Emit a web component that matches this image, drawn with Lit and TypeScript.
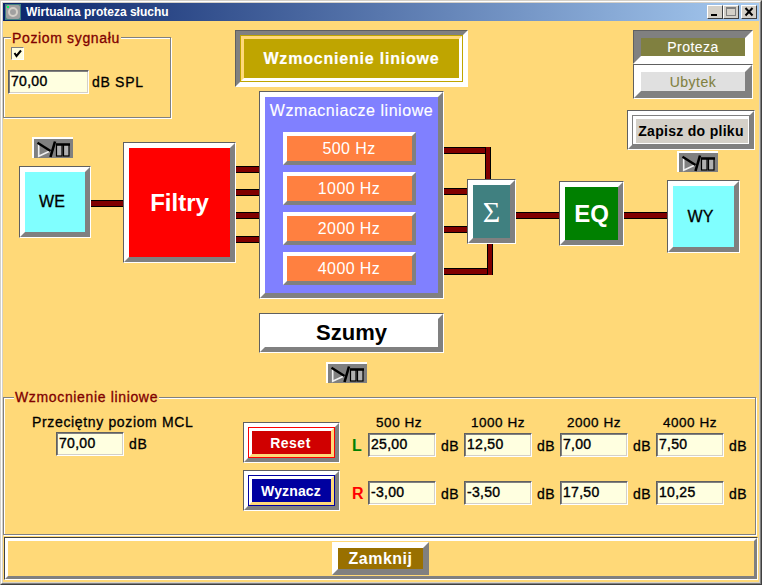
import { LitElement, html, css, svg } from "lit";
import { customElement } from "lit/decorators.js";

const ORIGIN = { x: 3, y: 21 };
const place = (x: number, y: number, w: number, h: number) =>
  `left:${x - ORIGIN.x}px;top:${y - ORIGIN.y}px;width:${w}px;height:${h}px`;

// horizontal and vertical wires of the diagram: x0, y0, x1, y1
const wires: [number, number, number, number][] = [
  [91, 200, 123, 207],
  [236, 166, 259, 173],
  [236, 189, 259, 196],
  [236, 212, 259, 219],
  [236, 236, 259, 243],
  [444, 147, 491, 154],
  [485, 147, 491, 180],
  [444, 188, 467, 195],
  [444, 226, 467, 233],
  [444, 268, 493, 275],
  [487, 243, 493, 275],
  [516, 212, 559, 219],
  [624, 212, 667, 219],
];

const playIcon = svg`<svg class="pp" viewBox="0 0 41 21" width="41" height="21">
  <path d="M6.7 6.5 V19.3 L18 14" fill="none" stroke="#f0f0f0" stroke-width="1.6"/>
  <path d="M5.5 5.8 L18.5 14" stroke="#000" stroke-width="2.4" fill="none"/>
  <path d="M23 4.5 L18.5 20" stroke="#000" stroke-width="2.6" fill="none"/>
  <rect x="24.5" y="7.5" width="5.5" height="11.5" fill="#b0b0b0" stroke="#000" stroke-width="1.2"/>
  <rect x="31.5" y="7.5" width="5.5" height="11.5" fill="#b0b0b0" stroke="#000" stroke-width="1.2"/>
  <path d="M24 7.5 H38" stroke="#000" stroke-width="2.5"/>
</svg>`;

const freqs = ["500 Hz", "1000 Hz", "2000 Hz", "4000 Hz"];
const left = ["25,00", "12,50", "7,00", "7,50"];
const right = ["-3,00", "-3,50", "17,50", "10,25"];

@customElement("app-root")
export class AppRoot extends LitElement {
  static styles = css`
    :host {
      display: block;
      width: 762px;
      height: 585px;
      font-family: "Liberation Sans", Arial, sans-serif;
      color: #000;
      overflow: hidden;
      -webkit-text-stroke: 0.3px currentColor;
    }
    * { box-sizing: border-box; }
    .window {
      width: 762px;
      height: 585px;
      background: #d4d0c8;
      border: 1px solid;
      border-color: #d4d0c8 #404040 #404040 #d4d0c8;
      display: flex;
      flex-direction: column;
    }
    .window-in {
      flex: 1;
      min-height: 0;
      border: 1px solid;
      border-color: #fff #808080 #808080 #fff;
      padding: 1px;
      display: flex;
      flex-direction: column;
    }
    .title {
      height: 18px;
      flex: none;
      background: linear-gradient(90deg, #0a246a, #a6caf0);
      color: #fff;
      display: flex;
      align-items: center;
      padding: 0 2px;
      gap: 5px;
      font-size: 12px;
      font-weight: 700;
      -webkit-text-stroke: 0;
    }
    .tbtns { margin-left: auto; display: flex; }
    .tb {
      width: 16px;
      height: 14px;
      background: #d4d0c8;
      border: 1px solid;
      border-color: #fff #404040 #404040 #fff;
      display: block;
    }
    .tb svg { display: block; }
    .tb.close { margin-left: 2px; }
    .client {
      flex: 1;
      min-height: 0;
      background: #ffd978;
      display: flex;
      flex-direction: column;
    }
    .canvas { position: relative; height: 376px; flex: none; }
    .abs { position: absolute; }
    .wire {
      position: absolute;
      background: #800000;
      border: 1px solid #000;
      border-left: 0;
      border-right: 0;
    }
    .wire.v { border: 0; border-left: 1px solid #000; border-right: 1px solid #000; }

    /* bevels: an outer hairline and a wide mitred edge around the face */
    .out {
      position: absolute;
      border: 1px solid;
      border-color: #606060 #fff #fff #606060;
    }
    .bev {
      width: 100%;
      height: 100%;
      border: 5px solid;
      border-color: #fff #808080 #808080 #fff;
      display: flex;
      align-items: center;
      justify-content: center;
    }
    .pressed { border-color: #808080 #fff #fff #808080; }
    .face {
      width: 100%;
      height: 100%;
      display: flex;
      align-items: center;
      justify-content: center;
    }
    .filtry { background: #f00; color: #fff; font: 700 24px "Liberation Sans", sans-serif; -webkit-text-stroke: 0; }
    .cyan { background: #80ffff; font-size: 16px; padding-right: 6px; }
    .eq { background: #008000; color: #fff; font: 700 24px "Liberation Sans", sans-serif; -webkit-text-stroke: 0; }
    .sum { background: #408080; color: #fff; font: 30px "Liberation Serif", serif; -webkit-text-stroke: 0; }
    .szumy { background: #fff; font: 700 22px "Liberation Sans", sans-serif; -webkit-text-stroke: 0; }
    .panel { background: #8080ff; position: relative; }
    .panel-title {
      position: absolute;
      left: 0;
      right: 0;
      top: 5px;
      text-align: center;
      color: #fff;
      font-size: 16px;
      letter-spacing: 0.55px;
      white-space: nowrap;
      -webkit-text-stroke: 0.15px #fff;
    }
    .freq {
      position: absolute;
      border: 4px solid;
      border-color: #fff #808080 #808080 #fff;
      background: #ff8040;
      color: #fff;
      font-size: 16px;
      letter-spacing: 0.4px;
      display: flex;
      align-items: center;
      justify-content: center;
      padding-right: 1px;
      -webkit-text-stroke: 0;
    }
    .mode { border-width: 7px; font-size: 14px; letter-spacing: 0.5px; -webkit-text-stroke: 0.1px currentColor; }
    .proteza { background: #808040; color: #fff; }
    .ubytek { background: #e0e0e0; color: #808040; }

    .pp-btn {
      position: absolute;
      width: 41px;
      height: 21px;
      background: #808080;
      border: solid #fff;
      border-width: 2px 0 0 2px;
    }
    .pp { display: block; margin: -2px 0 0 -2px; }

    /* buttons with a focus line inside the edge */
    .fbtn .bev { border-width: 4px; }
    .ring {
      width: 100%;
      height: 100%;
      border: 1px solid;
    }
    .ring2 {
      width: 100%;
      height: 100%;
      border: 3px solid;
      border-color: #fff #ffd978 #ffd978 #fff;
    }
    .gold .ring { border-color: #bfa500; }
    .gold .ring2 { border-color: #ffd978 #fff #fff #ffd978; }
    .gold .face { background: #bfa500; color: #fff; font: 700 16px "Liberation Sans", sans-serif; letter-spacing: 0.8px; -webkit-text-stroke: 0.2px #fff; }
    .save .ring { border-color: #808080; border-right-width: 1px; }
    .save .ring2 { border-color: #fff; border-width: 3px 1px 1px 3px; }
    .save .face { background: #d4d0c8; font: 700 14px "Liberation Sans", sans-serif; letter-spacing: 0.3px; white-space: nowrap; -webkit-text-stroke: 0; padding-right: 2px; }

    /* etched groups */
    .group {
      position: relative;
      border: 1px solid #808080;
      box-shadow: 1px 1px 0 #fff, inset 1px 1px 0 #fff;
    }
    .legend {
      position: absolute;
      background: #ffd978;
      color: #800000;
      font-size: 14px;
      line-height: 16px;
      padding: 0 1px;
      white-space: nowrap;
      letter-spacing: 0.65px;
    }
    .signal .legend { left: 7px; top: -8px; }
    .signal { display: flex; flex-direction: column; padding: 9px 0 0 4px; }
    .check {
      width: 13px;
      height: 13px;
      margin-left: 3px;
      background: #ffffe0;
      border: 1px solid;
      border-color: #808080 #fff #fff #808080;
      display: block;
    }
    .check svg { display: block; }
    .sigrow { display: flex; align-items: center; gap: 3px; margin-top: 10px; font-size: 14px; letter-spacing: 0.7px; }
    .field {
      flex: none;
      background: #ffffe0;
      border: 1px solid;
      border-color: #606060 #fff #fff #606060;
      box-shadow: inset 1px 1px 0 #808080, inset -1px -1px 0 #d4d0c8;
      font-size: 14px;
      font-weight: 400;
      line-height: 18px;
      padding: 1px 0 0 2px;
      letter-spacing: 0.3px;
      display: block;
      height: 24px;
      width: 68px;
      -webkit-text-stroke: 0.4px #000;
    }
    .signal .field { width: 81px; padding-left: 2px; }

    .gain {
      height: 138px;
      flex: none;
      margin-right: 3px;
      display: flex;
      padding-top: 17px;
      font-size: 14px;
    }
    .gain .legend { left: 10px; top: -9px; }
    .mcl { width: 239px; flex: none; display: flex; flex-direction: column; letter-spacing: 0.65px; }
    .mcl-label { margin: -1px 0 0 28px; line-height: 16px; white-space: nowrap; }
    .mcl-row { display: flex; align-items: center; gap: 5px; margin: 2px 0 0 52px; }
    .acts { width: 97px; flex: none; display: flex; flex-direction: column; gap: 7px; margin-top: 7px; }
    .fbtn-flow { position: relative; width: 97px; height: 41px; flex: none; border: 1px solid; border-color: #606060 #fff #fff #606060; }
    .red .ring { border-color: #f00; }
    .red .face { background: #d00000; color: #fff; font: 700 14px "Liberation Sans", sans-serif; letter-spacing: 0.5px; padding-right: 2px; -webkit-text-stroke: 0; }
    .blue .ring { border-color: #0000a0; }
    .blue .face { background: #0000a0; color: #fff; font: 700 14px "Liberation Sans", sans-serif; letter-spacing: 0.15px; padding-right: 1px; -webkit-text-stroke: 0; }
    .grid {
      margin-left: 12px;
      display: grid;
      grid-template-columns: 16px repeat(4, 68px 28px);
      grid-template-rows: 18px 24px 24px 24px;
      align-items: center;
      letter-spacing: 0.5px;
    }
    .hz { text-align: center; white-space: nowrap; font-size: 13.5px; line-height: 16px; align-self: start; font-weight: 400; }
    .hz.first { padding-right: 6px; }
    .db { padding-left: 5px; padding-top: 2px; }
    .spacer { grid-column: 1 / -1; }
    .lr { font-weight: 700; font-size: 16px; padding-top: 2px; -webkit-text-stroke: 0; }
    .l { color: #008000; }
    .r { color: #f00; }

    .footer {
      height: 43px;
      flex: none;
      margin: 2px 1px 0 1px;
      border: 1px solid;
      border-color: #404040 #fff #fff #404040;
    }
    .footer-in {
      height: 100%;
      border: 3px solid;
      border-color: #fff #808080 #808080 #fff;
      display: flex;
      justify-content: center;
      align-items: center;
      padding-right: 1px;
    }
    .close-btn {
      width: 97px;
      height: 33px;
      border: 6px solid;
      border-color: #fff #808080 #808080 #fff;
      background: #997000;
      color: #fff;
      font: 700 16px "Liberation Sans", sans-serif;
      letter-spacing: 0.5px;
      display: flex;
      align-items: center;
      justify-content: center;
      -webkit-text-stroke: 0;
    }
  `;

  private titleIcon() {
    return svg`<svg width="16" height="16" viewBox="0 0 16 16">
      <rect width="16" height="16" fill="#408080"/>
      <rect x="1" y="1" width="14" height="14" rx="2" fill="#a0a0a0"/>
      <circle cx="8" cy="8" r="4" fill="none" stroke="#d4d0c8" stroke-width="2"/>
      <rect x="2" y="2" width="2" height="2" fill="#00ff60"/>
    </svg>`;
  }

  private box(x: number, y: number, w: number, h: number, faceCls: string, text: string) {
    return html`<div class="out" style=${place(x, y, w, h)}>
      <div class="bev"><div class="face ${faceCls}">${text}</div></div>
    </div>`;
  }

  private cellRow(label: string, cls: string, vals: string[]) {
    return html`<span class="lr ${cls}">${label}</span>
      ${vals.map((v) => html`<span class="field">${v}</span><span class="db">dB</span>`)}`;
  }

  render() {
    return html`<div class="window"><div class="window-in">
      <div class="title">
        ${this.titleIcon()}
        <span>Wirtualna proteza słuchu</span>
        <span class="tbtns">
          <span class="tb"><svg width="14" height="12"><rect x="3" y="8" width="6" height="2" fill="#000"/></svg></span>
          <span class="tb"><svg width="14" height="12"><rect x="2.5" y="1.5" width="9" height="8" fill="none" stroke="#808080"/><rect x="2" y="1" width="10" height="2" fill="#808080"/></svg></span>
          <span class="tb close"><svg width="14" height="12"><path d="M3.5 2 L10.5 9.5 M10.5 2 L3.5 9.5" stroke="#000" stroke-width="2"/></svg></span>
        </span>
      </div>
      <div class="client">
        <div class="canvas">
          ${wires.map(([x0, y0, x1, y1]) => html`<div
            class="wire ${x1 - x0 < 10 ? "v" : ""}"
            style=${place(x0, y0, x1 - x0, y1 - y0)}></div>`)}

          <div class="group signal abs" style=${place(3, 37, 168, 81)}>
            <span class="legend">Poziom sygnału</span>
            <span class="check"><svg width="11" height="11"><path d="M2.5 5 L4.5 8 L9 2.5" fill="none" stroke="#000" stroke-width="2"/></svg></span>
            <div class="sigrow"><span class="field">70,00</span><span>dB SPL</span></div>
          </div>

          <div class="out fbtn gold" style=${place(235, 30, 233, 57)}>
            <div class="bev pressed"><div class="ring"><div class="ring2"><div class="face">Wzmocnienie liniowe</div></div></div></div>
          </div>

          <div class="out" style=${place(633, 30, 120, 34)}>
            <div class="bev pressed mode"><div class="face proteza">Proteza</div></div>
          </div>
          <div class="out" style=${place(633, 64, 120, 35)}>
            <div class="bev mode"><div class="face ubytek">Ubytek</div></div>
          </div>

          <div class="out fbtn save" style=${place(627, 110, 128, 40)}>
            <div class="bev"><div class="ring"><div class="ring2"><div class="face">Zapisz do pliku</div></div></div></div>
          </div>

          <div class="pp-btn" style=${place(32, 137, 41, 21)}>${playIcon}</div>
          <div class="pp-btn" style=${place(677, 151, 41, 21)}>${playIcon}</div>
          <div class="pp-btn" style=${place(326, 362, 41, 21)}>${playIcon}</div>

          ${this.box(19, 166, 72, 72, "cyan", "WE")}
          ${this.box(123, 142, 113, 121, "filtry", "Filtry")}
          ${this.box(467, 179, 49, 65, "sum", "Σ")}
          ${this.box(559, 181, 65, 65, "eq", "EQ")}
          ${this.box(667, 180, 73, 73, "cyan", "WY")}
          ${this.box(259, 313, 185, 40, "szumy", "Szumy")}

          <div class="out" style=${place(259, 91, 185, 208)}>
            <div class="bev"><div class="face panel"><span class="panel-title">Wzmacniacze liniowe</span></div></div>
          </div>
          ${freqs.map((f, i) => html`<div class="freq" style=${place(283, 132 + i * 40, 133, 33)}>${f}</div>`)}
        </div>

        <div class="group gain">
          <span class="legend">Wzmocnienie liniowe</span>
          <div class="mcl">
            <div class="mcl-label">Przeciętny poziom MCL</div>
            <div class="mcl-row"><span class="field">70,00</span><span>dB</span></div>
          </div>
          <div class="acts">
            <div class="fbtn-flow fbtn red"><div class="bev"><div class="ring"><div class="ring2"><div class="face">Reset</div></div></div></div></div>
            <div class="fbtn-flow fbtn blue"><div class="bev"><div class="ring"><div class="ring2"><div class="face">Wyznacz</div></div></div></div></div>
          </div>
          <div class="grid">
            <span></span>
            ${freqs.map((f, i) => html`<span class="hz ${i === 0 ? "first" : ""}">${f}</span><span></span>`)}
            ${this.cellRow("L", "l", left)}
            <span class="spacer"></span>
            ${this.cellRow("R", "r", right)}
          </div>
        </div>

        <div class="footer"><div class="footer-in"><div class="close-btn">Zamknij</div></div></div>
      </div>
    </div></div>`;
  }
}
